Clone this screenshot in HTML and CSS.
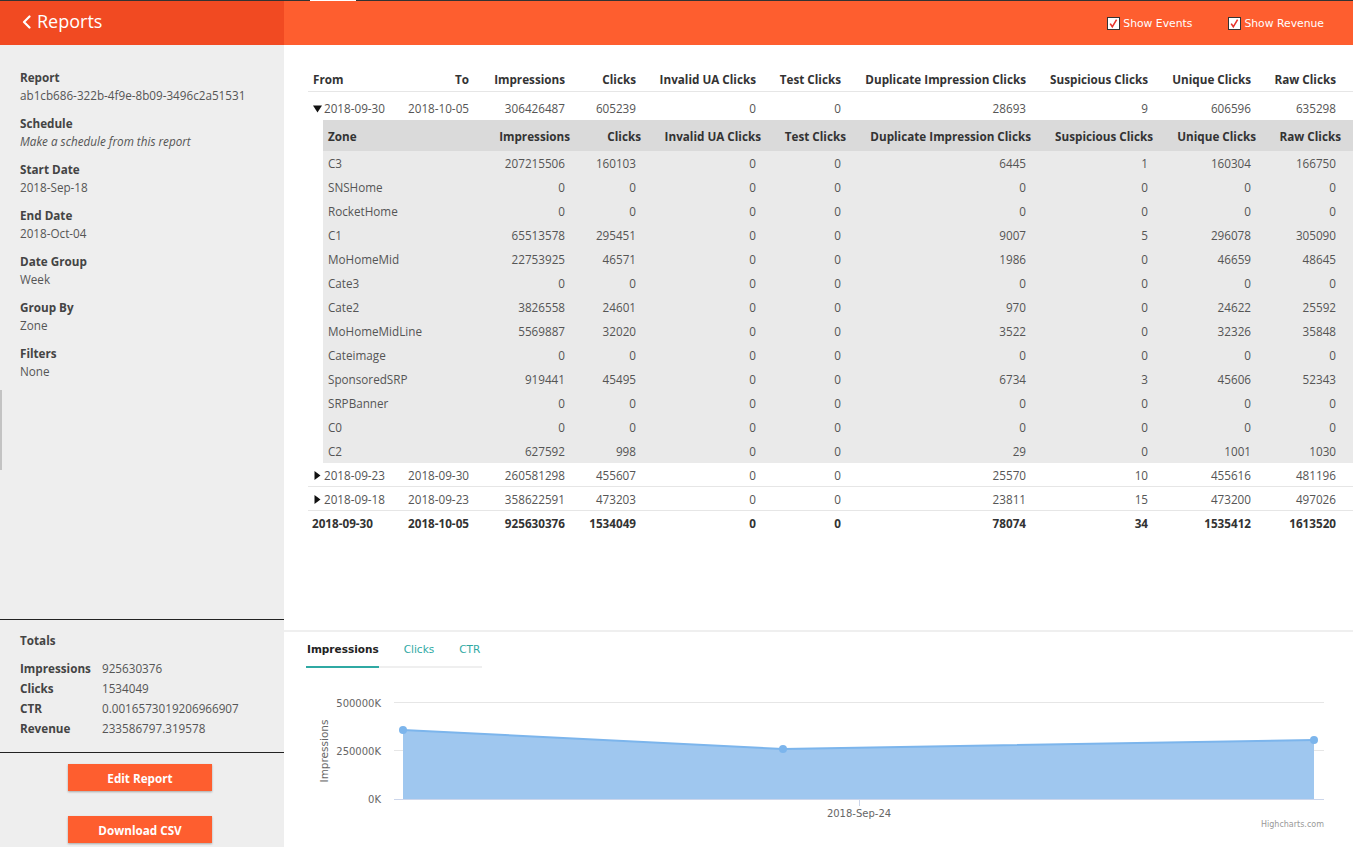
FILE: index.html
```html
<!DOCTYPE html>
<html>
<head>
<meta charset="utf-8">
<link rel="stylesheet" href="styles.css">
</head>
<body>
<div class="topline"><div class="tl-a"></div><div class="tl-b"></div><div class="tl-c"></div></div>
<header class="header">
  <div class="hleft">
    <svg class="chev" width="9" height="14" viewBox="0 0 9 14"><polyline points="7.5,1.5 2,7 7.5,12.5" fill="none" stroke="#fff" stroke-width="2.2" stroke-linecap="round" stroke-linejoin="round"/></svg>
    <span class="title">Reports</span>
  </div>
  <div class="hright">
    <label class="chk"><svg width="13" height="13" viewBox="0 0 13 13"><rect x="0.5" y="0.5" width="12" height="12" fill="#fff" stroke="#333"/><path d="M3.2 6.6 L5.3 9.8 L9.6 2.6" fill="none" stroke="#e8332a" stroke-width="1.6"/></svg><span>Show Events</span></label>
    <label class="chk"><svg width="13" height="13" viewBox="0 0 13 13"><rect x="0.5" y="0.5" width="12" height="12" fill="#fff" stroke="#333"/><path d="M3.2 6.6 L5.3 9.8 L9.6 2.6" fill="none" stroke="#e8332a" stroke-width="1.6"/></svg><span>Show Revenue</span></label>
  </div>
</header>
<div class="layout">
  <aside class="sidebar">
    <div class="scrollmark"></div>
    <div class="side-top">
      <div class="side-item"><div class="side-label">Report</div><div class="side-value">ab1cb686-322b-4f9e-8b09-3496c2a51531</div></div>
      <div class="side-item"><div class="side-label">Schedule</div><div class="side-value italic">Make a schedule from this report</div></div>
      <div class="side-item"><div class="side-label">Start Date</div><div class="side-value">2018-Sep-18</div></div>
      <div class="side-item"><div class="side-label">End Date</div><div class="side-value">2018-Oct-04</div></div>
      <div class="side-item"><div class="side-label">Date Group</div><div class="side-value">Week</div></div>
      <div class="side-item"><div class="side-label">Group By</div><div class="side-value">Zone</div></div>
      <div class="side-item"><div class="side-label">Filters</div><div class="side-value">None</div></div>
    </div>
    <div class="totals">
      <div class="totals-title">Totals</div>
      <div class="totals-grid">
        <div class="tk">Impressions</div><div class="tv">925630376</div>
        <div class="tk">Clicks</div><div class="tv">1534049</div>
        <div class="tk">CTR</div><div class="tv">0.0016573019206966907</div>
        <div class="tk">Revenue</div><div class="tv">233586797.319578</div>
      </div>
    </div>
    <div class="actions">
      <button class="btn">Edit Report</button>
      <button class="btn">Download CSV</button>
    </div>
  </aside>
  <main class="main">
    <section class="tablewrap">
      <div class="grid head">
        <div class="c first">From</div><div class="c">To</div><div class="c">Impressions</div><div class="c">Clicks</div><div class="c">Invalid UA Clicks</div><div class="c">Test Clicks</div><div class="c">Duplicate Impression Clicks</div><div class="c">Suspicious Clicks</div><div class="c">Unique Clicks</div><div class="c last">Raw Clicks</div>
      </div>
      <div class="grid row open">
        <div class="c first"><svg class="tri" width="9" height="8" viewBox="0 0 9 8"><polygon points="0,0.5 9,0.5 4.5,7.5" fill="#111"/></svg>2018-09-30</div><div class="c">2018-10-05</div><div class="c">306426487</div><div class="c">605239</div><div class="c">0</div><div class="c">0</div><div class="c">28693</div><div class="c">9</div><div class="c">606596</div><div class="c last">635298</div>
      </div>
      <div class="nested">
        <div class="ngrid nhead">
          <div class="c first">Zone</div><div class="c">Impressions</div><div class="c">Clicks</div><div class="c">Invalid UA Clicks</div><div class="c">Test Clicks</div><div class="c">Duplicate Impression Clicks</div><div class="c">Suspicious Clicks</div><div class="c">Unique Clicks</div><div class="c last">Raw Clicks</div>
        </div>
        <div class="ngrid nrow"><div class="c first">C3</div><div class="c">207215506</div><div class="c">160103</div><div class="c">0</div><div class="c">0</div><div class="c">6445</div><div class="c">1</div><div class="c">160304</div><div class="c last">166750</div></div>
        <div class="ngrid nrow"><div class="c first">SNSHome</div><div class="c">0</div><div class="c">0</div><div class="c">0</div><div class="c">0</div><div class="c">0</div><div class="c">0</div><div class="c">0</div><div class="c last">0</div></div>
        <div class="ngrid nrow"><div class="c first">RocketHome</div><div class="c">0</div><div class="c">0</div><div class="c">0</div><div class="c">0</div><div class="c">0</div><div class="c">0</div><div class="c">0</div><div class="c last">0</div></div>
        <div class="ngrid nrow"><div class="c first">C1</div><div class="c">65513578</div><div class="c">295451</div><div class="c">0</div><div class="c">0</div><div class="c">9007</div><div class="c">5</div><div class="c">296078</div><div class="c last">305090</div></div>
        <div class="ngrid nrow"><div class="c first">MoHomeMid</div><div class="c">22753925</div><div class="c">46571</div><div class="c">0</div><div class="c">0</div><div class="c">1986</div><div class="c">0</div><div class="c">46659</div><div class="c last">48645</div></div>
        <div class="ngrid nrow"><div class="c first">Cate3</div><div class="c">0</div><div class="c">0</div><div class="c">0</div><div class="c">0</div><div class="c">0</div><div class="c">0</div><div class="c">0</div><div class="c last">0</div></div>
        <div class="ngrid nrow"><div class="c first">Cate2</div><div class="c">3826558</div><div class="c">24601</div><div class="c">0</div><div class="c">0</div><div class="c">970</div><div class="c">0</div><div class="c">24622</div><div class="c last">25592</div></div>
        <div class="ngrid nrow"><div class="c first">MoHomeMidLine</div><div class="c">5569887</div><div class="c">32020</div><div class="c">0</div><div class="c">0</div><div class="c">3522</div><div class="c">0</div><div class="c">32326</div><div class="c last">35848</div></div>
        <div class="ngrid nrow"><div class="c first">Cateimage</div><div class="c">0</div><div class="c">0</div><div class="c">0</div><div class="c">0</div><div class="c">0</div><div class="c">0</div><div class="c">0</div><div class="c last">0</div></div>
        <div class="ngrid nrow"><div class="c first">SponsoredSRP</div><div class="c">919441</div><div class="c">45495</div><div class="c">0</div><div class="c">0</div><div class="c">6734</div><div class="c">3</div><div class="c">45606</div><div class="c last">52343</div></div>
        <div class="ngrid nrow"><div class="c first">SRPBanner</div><div class="c">0</div><div class="c">0</div><div class="c">0</div><div class="c">0</div><div class="c">0</div><div class="c">0</div><div class="c">0</div><div class="c last">0</div></div>
        <div class="ngrid nrow"><div class="c first">C0</div><div class="c">0</div><div class="c">0</div><div class="c">0</div><div class="c">0</div><div class="c">0</div><div class="c">0</div><div class="c">0</div><div class="c last">0</div></div>
        <div class="ngrid nrow"><div class="c first">C2</div><div class="c">627592</div><div class="c">998</div><div class="c">0</div><div class="c">0</div><div class="c">29</div><div class="c">0</div><div class="c">1001</div><div class="c last">1030</div></div>
      </div>
      <div class="grid row">
        <div class="c first"><svg class="tri r" width="7" height="9" viewBox="0 0 7 9"><polygon points="0.5,0 6.5,4.5 0.5,9" fill="#111"/></svg>2018-09-23</div><div class="c">2018-09-30</div><div class="c">260581298</div><div class="c">455607</div><div class="c">0</div><div class="c">0</div><div class="c">25570</div><div class="c">10</div><div class="c">455616</div><div class="c last">481196</div>
      </div>
      <div class="grid row">
        <div class="c first"><svg class="tri r" width="7" height="9" viewBox="0 0 7 9"><polygon points="0.5,0 6.5,4.5 0.5,9" fill="#111"/></svg>2018-09-18</div><div class="c">2018-09-23</div><div class="c">358622591</div><div class="c">473203</div><div class="c">0</div><div class="c">0</div><div class="c">23811</div><div class="c">15</div><div class="c">473200</div><div class="c last">497026</div>
      </div>
      <div class="grid row total">
        <div class="c first">2018-09-30</div><div class="c">2018-10-05</div><div class="c">925630376</div><div class="c">1534049</div><div class="c">0</div><div class="c">0</div><div class="c">78074</div><div class="c">34</div><div class="c">1535412</div><div class="c last">1613520</div>
      </div>
    </section>
    <section class="chart">
      <div class="tabs">
        <div class="tab active">Impressions</div>
        <div class="tab">Clicks</div>
        <div class="tab">CTR</div>
      </div>
      <svg class="plot" width="1069" height="179" viewBox="284 668 1069 179">
        <line x1="394" y1="702.5" x2="1324" y2="702.5" stroke="#e6e6e6"/>
        <line x1="394" y1="750.5" x2="1324" y2="750.5" stroke="#e6e6e6"/>
        <polygon points="403,730 783,749 1314,740 1314,799 403,799" fill="#9fc7ef"/>
        <polyline points="403,730 783,749 1314,740" fill="none" stroke="#7cb5ec" stroke-width="2"/>
        <circle cx="403" cy="730" r="4" fill="#7cb5ec"/>
        <circle cx="783" cy="749" r="4" fill="#7cb5ec"/>
        <circle cx="1314" cy="740" r="4" fill="#7cb5ec"/>
        <line x1="394" y1="799.5" x2="1324" y2="799.5" stroke="#ccd6eb"/>
        <line x1="859.5" y1="800" x2="859.5" y2="806" stroke="#ccd6eb"/>
        <text class="ylab" x="381" y="707" text-anchor="end">500000K</text>
        <text class="ylab" x="381" y="755" text-anchor="end">250000K</text>
        <text class="ylab" x="381" y="803" text-anchor="end">0K</text>
        <text class="ytitle" x="0" y="0" text-anchor="middle" transform="translate(328 751) rotate(-90)">Impressions</text>
        <text class="xlab" x="859" y="817" text-anchor="middle">2018-Sep-24</text>
        <text class="credit" x="1324" y="827" text-anchor="end">Highcharts.com</text>
      </svg>
    </section>
  </main>
</div>
</body>
</html>
```
FILE: styles.css
```css
* { box-sizing: border-box; }
html, body { margin: 0; padding: 0; }
body {
  width: 1353px;
  height: 847px;
  overflow: hidden;
  font-family: "Open Sans", "Liberation Sans", sans-serif;
  font-size: 11.7px;
  color: #555;
  background: #fff;
}

.topline { display: flex; height: 1px; }
.tl-a { width: 310px; background: #333; }
.tl-b { width: 46px; background: #fff; }
.tl-c { flex: 1; background: #333; }

.header { display: flex; height: 44px; }
.hleft {
  width: 284px;
  background: #f14a22;
  color: #fff;
  display: flex;
  align-items: center;
  padding-left: 22px;
  gap: 6px;
  font-size: 18px;
}
.hleft .title { line-height: 1; margin-top: -4px; }
.chev { margin-top: -3px; }
.hright {
  flex: 1;
  background: #fe5e2f;
  display: flex;
  align-items: center;
  justify-content: flex-end;
  padding-right: 29px;
  gap: 36px;
}
.chk {
  display: flex;
  align-items: center;
  gap: 3px;
  color: #fff;
  font-family: "DejaVu Sans", sans-serif;
  font-size: 10.8px;
  margin-top: 1px;
}

.layout { display: flex; height: 802px; }

.sidebar {
  width: 284px;
  background: #eeeeee;
  display: flex;
  flex-direction: column;
  position: relative;
}
.scrollmark {
  position: absolute;
  left: 0;
  top: 345px;
  width: 2px;
  height: 80px;
  background: #c3c3c3;
}
.side-top { flex: 1; padding: 23px 20px 0; }
.side-item { margin-bottom: 10px; line-height: 18px; }
.side-label { font-weight: 700; color: #444; }
.side-value { color: #555; }
.italic { font-style: italic; }

.totals {
  border-top: 1px solid #222;
  border-bottom: 1px solid #222;
  padding: 11px 20px 14px;
  line-height: 18px;
}
.totals-title { font-weight: 700; color: #444; margin-bottom: 9px; }
.totals-grid {
  display: grid;
  grid-template-columns: 82px auto;
  grid-auto-rows: 20px;
  align-items: center;
}
.tk { font-weight: 700; color: #444; }
.tv { color: #555; }

.actions {
  display: flex;
  flex-direction: column;
  align-items: center;
  gap: 25px;
  padding: 11px 0 4px;
  margin-left: -4px;
}
.btn {
  width: 144px;
  height: 27px;
  border: none;
  background: #fe5e2f;
  color: #fff;
  font-family: "Open Sans", sans-serif;
  font-weight: 700;
  font-size: 11.7px;
  box-shadow: 0 1px 2px rgba(0,0,0,0.3);
  padding: 0;
}

.main { flex: 1; display: flex; flex-direction: column; }
.tablewrap { height: 585px; padding-top: 22px; padding-left: 24px; }

.grid {
  display: grid;
  grid-template-columns: 86px 80px 96px 71px 120px 85px 185px 122px 103px 97px;
  align-items: center;
}
.ngrid {
  display: grid;
  grid-template-columns: 151px 96px 71px 120px 85px 185px 122px 103px 97px;
  align-items: center;
}
.c { text-align: right; padding-right: 5px; white-space: nowrap; }
.c.first { text-align: left; padding-left: 5px; padding-right: 0; }
.c.last { padding-right: 17px; }

.head { height: 25px; border-bottom: 1px solid #e6e6e6; font-weight: 700; color: #333; }
.row { height: 24px; border-bottom: 1px solid #e6e6e6; color: #555; }
.row.open { height: 28px; border-bottom: none; padding-top: 3px; }
.row.total { border-bottom: none; font-weight: 700; color: #333; }
.row.total .c.first { padding-left: 4px; }
.tri { margin-right: 2px; vertical-align: 0; }
.tri.r { margin-left: 1px; margin-right: 3px; }

.nested { margin-left: 15px; background: #eaeaea; }
.nhead { height: 31px; background: #dadada; font-weight: 700; color: #333; }
.nhead .c { padding-right: 0; }
.nhead .c.first { padding-left: 5px; }
.nhead .c.last { padding-right: 12px; }
.nrow { height: 24px; color: #555; }

.chart { flex: 1; border-top: 2px solid #efefef; }
.tabs {
  display: flex;
  gap: 25px;
  margin-left: 22px;
  width: 176px;
  height: 36px;
  border-bottom: 2px solid #efefef;
  font-family: "DejaVu Sans", sans-serif;
  font-size: 10.5px;
}
.tab {
  height: 36px;
  line-height: 34px;
  color: #2fa9a3;
  margin-bottom: -2px;
  border-bottom: 2px solid transparent;
}
.tab.active { color: #222; font-weight: 700; border-bottom-color: #2fa9a3; }
.tab:first-child { padding-left: 1px; }

.plot { display: block; }
.ylab, .xlab { font-family: "DejaVu Sans", sans-serif; font-size: 10px; fill: #666; }
.ytitle { font-family: "DejaVu Sans", sans-serif; font-size: 10.5px; fill: #666; }
.credit { font-family: "DejaVu Sans", sans-serif; font-size: 8px; fill: #999; }
```
